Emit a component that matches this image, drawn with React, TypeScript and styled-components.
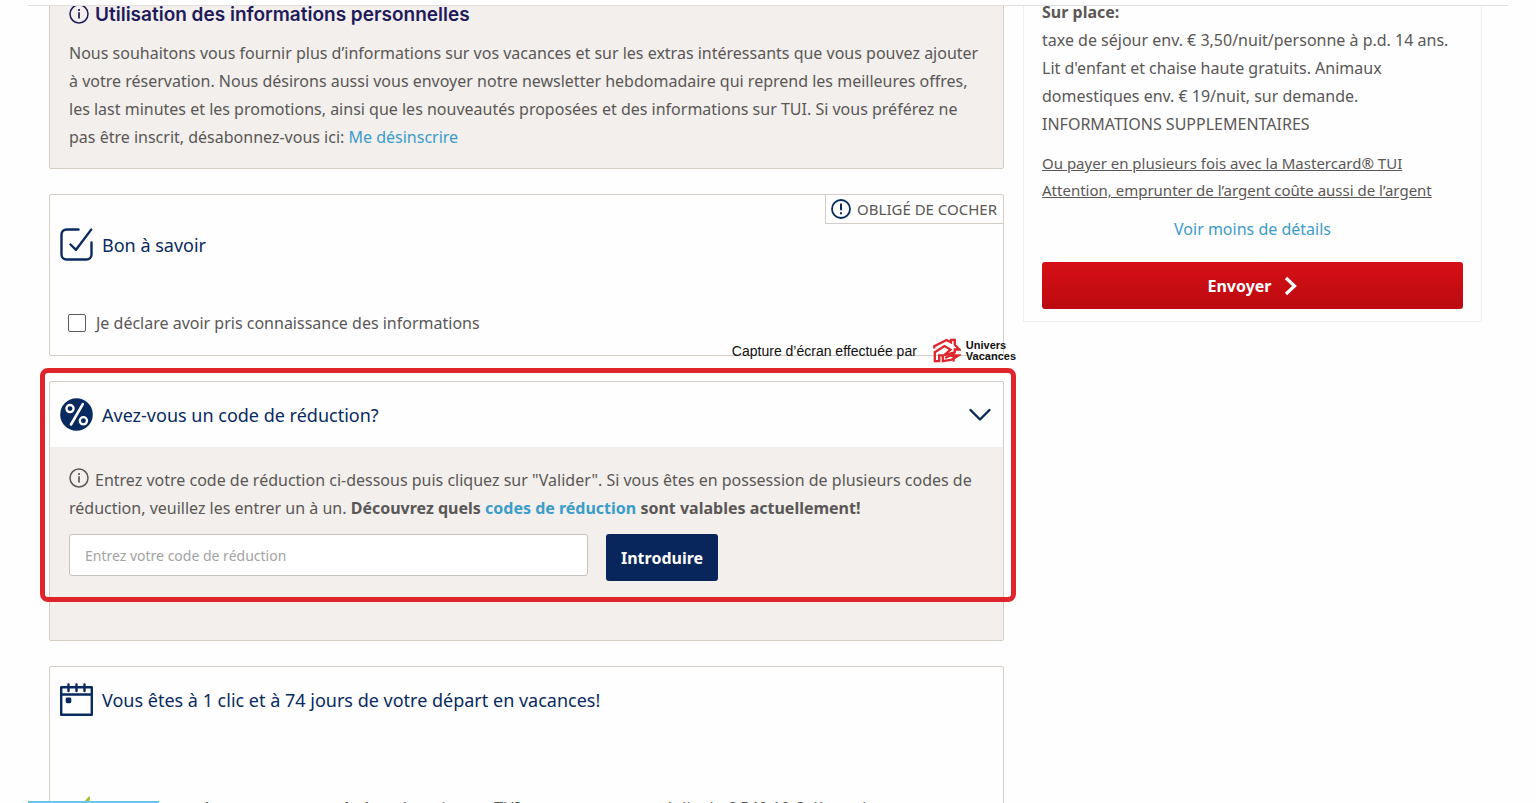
import React from 'react';
import styled, { createGlobalStyle, css } from 'styled-components';

const navy = '#092a5e';
const body = '#5a5756';
const sand = '#f2efec';
const line = '#d3cdc6';

const GlobalStyle = createGlobalStyle`
  *, *::before, *::after { box-sizing: border-box; }
  body {
    margin: 0;
    background: #fefefe;
    color: ${body};
    font: 16px/28px 'Noto Sans', 'Open Sans', sans-serif;
    overflow: hidden;
  }
  h2, h3, p { margin: 0; }
  svg { display: block; flex: none; }
`;

const Page = styled.div`
  height: 100vh;
  display: flex;
  flex-direction: column;
`;

const TopBar = styled.header`
  flex: none;
  height: 6px;
  margin: 0 28px;
  border-bottom: 1px solid #e2e0de;
`;

const Viewport = styled.div`
  flex: 1;
  min-height: 0;
  overflow: hidden;
  padding: 0 54px 0 49px;
  display: grid;
  grid-template-columns: 955fr 459fr;
  align-items: start;
  gap: 19px;
`;

const Column = styled.main`
  display: flex;
  flex-direction: column;
  gap: 25px;
  min-width: 0;
  margin-top: -20px;
`;

const Panel = styled.section<{ $sand?: boolean }>`
  position: relative;
  border: 1px solid ${line};
  border-radius: 2px;
  background: ${(p) => (p.$sand ? sand : '#fefefe')};
`;

const InfoContent = styled.div`
  padding: 17px 18px 17px 19px;
`;

const InfoTitle = styled.h2`
  display: flex;
  align-items: flex-start;
  gap: 6px;
  margin-bottom: 13px;
  color: #1f1a5a;
  font: 600 19px/22px Inter, sans-serif;
`;

const Link = styled.a`
  color: #3b9cc9;
  text-decoration: none;
`;

const PanelHeader = styled.div`
  display: flex;
  align-items: center;
  gap: 9px;
  height: 65px;
  padding: 0 11px 0 10px;
`;

const PanelTitle = styled.h3`
  flex: 1;
  color: ${navy};
  font-size: 18px;
  font-weight: 400;
`;

const IconButton = styled.button`
  padding: 0;
  border: 0;
  background: none;
  color: ${navy};
  cursor: pointer;
`;

const RequiredTag = styled.span`
  position: absolute;
  top: 0;
  right: 0;
  display: flex;
  align-items: center;
  gap: 6px;
  height: 29px;
  padding: 0 6px 0 5px;
  border: solid ${line};
  border-width: 0 0 1px 1px;
  font-size: 15px;
  svg { color: ${navy}; }
`;

const Declaration = styled.div`
  padding-top: 17px;
`;

const CheckRow = styled.label`
  display: flex;
  align-items: center;
  gap: 10px;
  padding: 32px 18px 18px;
`;

const Checkbox = styled.input`
  appearance: none;
  flex: none;
  width: 18px;
  height: 18px;
  margin: 0;
  border: 1px solid #5c5c5c;
  border-radius: 2px;
  background: #fff;
`;

const DiscountBody = styled.div`
  padding: 19px 18px 59px 19px;
  background: ${sand};
`;

const InlineIcon = styled.span`
  display: inline-block;
  vertical-align: -2px;
  margin-right: 6px;
`;

const CodeForm = styled.form`
  display: flex;
  align-items: flex-start;
  gap: 18px;
  margin-top: 12px;
`;

const CodeInput = styled.input`
  flex: 0 1 519px;
  min-width: 0;
  height: 42px;
  padding: 0 15px;
  border: 1px solid #c6c2be;
  border-radius: 3px;
  background: #fff;
  color: ${body};
  font: 14px/20px 'Noto Sans', 'Open Sans', sans-serif;
  &::placeholder { color: #a3a3a3; opacity: 1; }
`;

const buttonBase = css`
  display: flex;
  align-items: center;
  justify-content: center;
  height: 47px;
  border: 0;
  border-radius: 3px;
  color: #fff;
  font: 700 16px/24px 'Noto Sans', 'Open Sans', sans-serif;
  cursor: pointer;
`;

const NavyButton = styled.button`
  ${buttonBase}
  padding: 0 15px;
  background: #08265a;
`;

const RedButton = styled.button`
  ${buttonBase}
  gap: 12px;
  width: 100%;
  background: linear-gradient(#d60f16, #bb0a10);
`;

const Highlight = styled.div`
  position: absolute;
  inset: -14px -13px 38px -10px;
  border: 5px solid #dd252b;
  border-radius: 8px;
  pointer-events: none;
`;

const Credit = styled.div`
  position: absolute;
  right: -13px;
  bottom: -8px;
  display: flex;
  align-items: center;
  gap: 16px;
  color: #111;
  font: 14px/20px 'Liberation Sans', Arial, sans-serif;
`;

const Brand = styled.span`
  display: flex;
  align-items: center;
  gap: 5px;
  font-size: 11px;
  font-weight: 700;
  line-height: 11px;
`;

const Offer = styled.p`
  display: flex;
  gap: 2px;
  padding: 62px 19px 20px 30px;
  white-space: nowrap;
`;

const Summary = styled.aside`
  min-width: 0;
  margin-top: -9px;
  padding: 0 18px 12px;
  border: 1px solid #efefef;
`;

const FinanceLink = styled.a`
  display: block;
  margin: 12px 0 11px;
  color: ${body};
  font-size: 15px;
  line-height: 27px;
`;

const DetailsLink = styled(Link)`
  display: block;
  margin-bottom: 19px;
  text-align: center;
`;

const StatusStrip = styled.div`
  position: fixed;
  bottom: 0;
  left: 28px;
  width: 131px;
  height: 2px;
  background: #6cc5ea;
`;

function CircleIcon({ alert = false }: { alert?: boolean }) {
  return (
    <svg width="20" height="20" viewBox="0 0 20 20" fill="none" stroke="currentColor" aria-hidden="true">
      <circle cx="10" cy="10" r="9" strokeWidth={alert ? 1.8 : 1.5} />
      {alert ? (
        <path d="M10 4.5v6.8M10 13.2v2.1" strokeWidth="2" />
      ) : (
        <path d="M10 8.2v6.4M10 5v1.9" strokeWidth="1.7" />
      )}
    </svg>
  );
}

function CheckedBoxIcon() {
  return (
    <svg width="33" height="33" viewBox="0 0 33 33" fill="none" stroke={navy} strokeWidth="2.4" strokeLinecap="round" strokeLinejoin="round" aria-hidden="true">
      <path d="M18.5 1.5H6.5a5 5 0 0 0-5 5v20a5 5 0 0 0 5 5h20a5 5 0 0 0 5-5V14.5" />
      <path d="M10.5 16.5l5.5 5.3L31.2 1.6" />
    </svg>
  );
}

function PercentIcon() {
  return (
    <svg width="33" height="33" viewBox="0 0 33 33" fill="none" stroke="#fff" aria-hidden="true">
      <circle cx="16.5" cy="16.5" r="16.3" fill={navy} stroke="none" />
      <path d="M22.8 6.2L11 26.5" strokeWidth="2.6" strokeLinecap="round" />
      <circle cx="10" cy="10.6" r="3.6" strokeWidth="2.3" />
      <circle cx="23.4" cy="22.8" r="3.6" strokeWidth="2.3" />
    </svg>
  );
}

function CalendarIcon() {
  return (
    <svg width="33" height="33" viewBox="0 0 33 33" fill="none" stroke={navy} strokeWidth="2.4" aria-hidden="true">
      <path d="M1.2 4.2h30.6v27.5H1.2zM1.2 11.5h30.6" strokeLinejoin="round" />
      <path d="M8.5 1.4v6.6M16.5 1.4v6.6M24.5 1.4v6.6" strokeLinecap="round" />
      <rect x="5.7" y="14.6" width="5.6" height="5.6" rx="1.4" fill={navy} stroke="none" />
    </svg>
  );
}

function HouseLogo() {
  return (
    <svg width="28" height="25" viewBox="0 0 28 25" fill="none" stroke="#dd252b" strokeWidth="2.3" aria-hidden="true">
      <path d="M1.3 10.5V8.3L13.5 2l4.5 2.4V1.8h3.8v4.9l4.6 4.8h-4.6v2.8L11 17.2" />
      <path d="M1 14.8L11.5 8l6 3.6-6.2 5.4" />
      <path d="M1.8 13.8v9.4h4.4v-5.8h3.6v5.8l9-1.6 6.7-4.1h-8.3l-5 2.6" />
      <path d="M18 18.5l2.6-2.2v7.5" strokeWidth="2" />
    </svg>
  );
}

function LeafIcon() {
  return (
    <svg width="22" height="22" viewBox="0 0 22 22" aria-hidden="true">
      <path d="M3 12C5 6 8 3 10 2c0 5-2 11-6 14z" fill="#a2bf26" />
    </svg>
  );
}

export default function App() {
  return (
    <Page>
      <GlobalStyle />
      <TopBar />
      <Viewport>
        <Column>
          <Panel $sand>
            <InfoContent>
              <InfoTitle>
                <CircleIcon />
                Utilisation des informations personnelles
              </InfoTitle>
              <p>
                Nous souhaitons vous fournir plus d’informations sur vos vacances et sur les extras intéressants que vous pouvez ajouter
                <br />
                à votre réservation. Nous désirons aussi vous envoyer notre newsletter hebdomadaire qui reprend les meilleures offres,
                <br />
                les last minutes et les promotions, ainsi que les nouveautés proposées et des informations sur TUI. Si vous préférez ne
                <br />
                pas être inscrit, désabonnez-vous ici: <Link href="#desinscription">Me désinscrire</Link>
              </p>
            </InfoContent>
          </Panel>

          <Panel>
            <RequiredTag>
              <CircleIcon alert />
              OBLIGÉ DE COCHER
            </RequiredTag>
            <Declaration>
              <PanelHeader>
                <CheckedBoxIcon />
                <PanelTitle>Bon à savoir</PanelTitle>
              </PanelHeader>
              <CheckRow>
                <Checkbox type="checkbox" />
                Je déclare avoir pris connaissance des informations
              </CheckRow>
            </Declaration>
            <Credit>
              Capture d’écran effectuée par
              <Brand>
                <HouseLogo />
                <span>
                  Univers
                  <br />
                  Vacances
                </span>
              </Brand>
            </Credit>
          </Panel>

          <Panel>
            <PanelHeader>
              <PercentIcon />
              <PanelTitle>Avez-vous un code de réduction?</PanelTitle>
              <IconButton type="button" aria-label="Replier" aria-expanded="true">
                <svg width="24" height="14" viewBox="0 0 24 14" fill="none" stroke="currentColor" strokeWidth="2.4" strokeLinecap="round" strokeLinejoin="round">
                  <path d="M2.5 2l9.5 9.5L21.500 2" />
                </svg>
              </IconButton>
            </PanelHeader>
            <DiscountBody>
              <p>
                <InlineIcon><CircleIcon /></InlineIcon>
                Entrez votre code de réduction ci-dessous puis cliquez sur "Valider". Si vous êtes en possession de plusieurs codes de
                <br />
                réduction, veuillez les entrer un à un.{' '}
                <strong>
                  Découvrez quels <Link href="#codes">codes de réduction</Link> sont valables actuellement!
                </strong>
              </p>
              <CodeForm onSubmit={(e) => e.preventDefault()}>
                <CodeInput type="text" aria-label="Code de réduction" placeholder="Entrez votre code de réduction" />
                <NavyButton type="submit">Introduire</NavyButton>
              </CodeForm>
            </DiscountBody>
            <Highlight />
          </Panel>

          <Panel>
            <PanelHeader>
              <CalendarIcon />
              <PanelTitle>Vous êtes à 1 clic et à 74 jours de votre départ en vacances!</PanelTitle>
            </PanelHeader>
            <Offer>
              <LeafIcon />
              <span>
                <strong>Réservez maintenant vos prochaines</strong> à venir avec TUI pour une somme réelle de € 549,10 € dès maintenant avec un
              </span>
            </Offer>
          </Panel>
        </Column>

        <Summary>
          <p>
            <strong>Sur place:</strong>
            <br />
            taxe de séjour env. € 3,50/nuit/personne à p.d. 14 ans.
            <br />
            Lit d'enfant et chaise haute gratuits. Animaux
            <br />
            domestiques env. € 19/nuit, sur demande.
            <br />
            INFORMATIONS SUPPLEMENTAIRES
          </p>
          <FinanceLink href="#mastercard">
            Ou payer en plusieurs fois avec la Mastercard® TUI
            <br />
            Attention, emprunter de l’argent coûte aussi de l’argent
          </FinanceLink>
          <DetailsLink href="#details">Voir moins de détails</DetailsLink>
          <RedButton type="button">
            Envoyer
            <svg width="14" height="20" viewBox="0 0 14 20" fill="none" stroke="currentColor" strokeWidth="3.2" aria-hidden="true">
              <path d="M2 2l8.500 8L2 18" />
            </svg>
          </RedButton>
        </Summary>
      </Viewport>
      <StatusStrip />
    </Page>
  );
}
